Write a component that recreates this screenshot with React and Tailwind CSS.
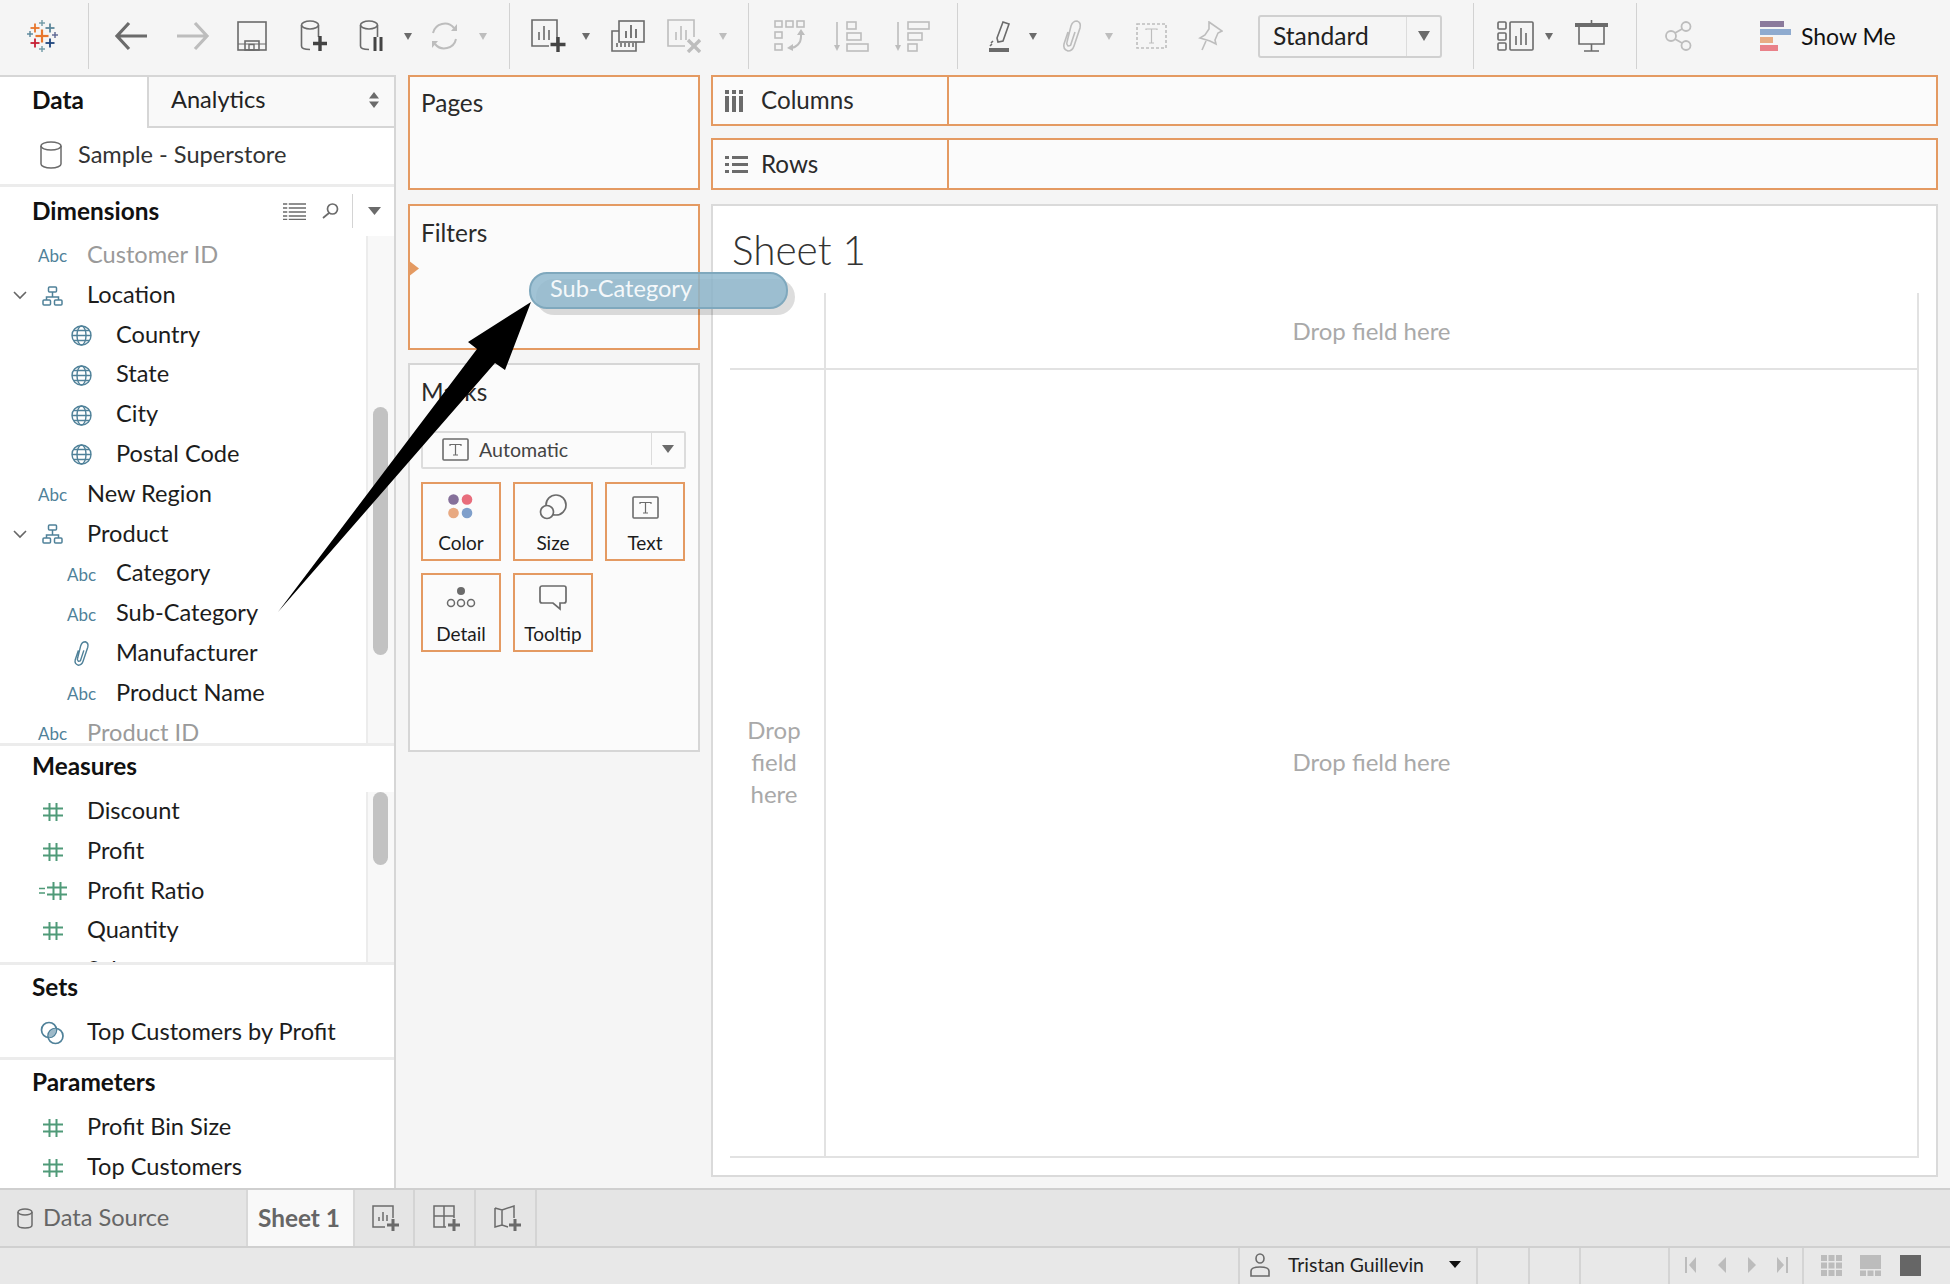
import React from "react";

const G = "#6b6b6b";
const L = "#bdbdbd";
const BLUE = "#4f8199";
const GREEN = "#4f9a78";

const Div = ({ c }) => <div className={`w-px h-[66px] bg-[#d2d2d2] ${c}`} />;
const DD = ({ c, color = G }) => (
  <svg width="8" height="7" viewBox="0 0 8 7" className={c}><path d="M0 0h8L4 7z" fill={color} /></svg>
);

const Logo = ({ c }) => {
  const cross = (x, y, s, t, col) => (
    <g key={`${x}-${y}`} fill={col}>
      <rect x={x - s} y={y - t / 2} width={s * 2} height={t} />
      <rect x={x - t / 2} y={y - s} width={t} height={s * 2} />
    </g>
  );
  return (
    <svg width="32" height="34" viewBox="0 0 32 34" className={c}>
      {cross(16, 17, 6.5, 2.2, "#e8762c")}
      {cross(9, 9, 4.5, 1.8, "#e8762c")}
      {cross(24, 9, 4.5, 1.8, "#5b879b")}
      {cross(16, 4, 3, 1.4, "#7099a6")}
      {cross(4, 15, 3, 1.4, "#59879b")}
      {cross(29, 16, 3, 1.4, "#5c6692")}
      {cross(9, 24, 4.5, 1.8, "#c72035")}
      {cross(24, 24, 4.5, 1.8, "#1f457e")}
      {cross(16, 30, 3, 1.4, "#7099a6")}
    </svg>
  );
};

const Back = ({ c, flip, color = G }) => (
  <svg width="34" height="30" viewBox="0 0 34 30" className={c} style={flip ? { transform: "scaleX(-1)" } : undefined}>
    <path d="M33 15H3M15 2 3 15l12 13" fill="none" stroke={color} strokeWidth="3.2" />
  </svg>
);

const Save = ({ c }) => (
  <svg width="30" height="30" viewBox="0 0 30 30" className={c} fill="none" stroke={G} strokeWidth="1.6">
    <rect x="1" y="1" width="28" height="28" />
    <path d="M1 23h28" strokeWidth="1" />
    <rect x="8" y="20" width="14" height="9" />
    <rect x="12" y="23.500" width="5" height="5.500" strokeWidth="1.4" />
  </svg>
);

const Cyl = ({ c, plus, pause }) => (
  <svg width="27" height="32" viewBox="0 0 27 32" className={c} fill="none" stroke={G} strokeWidth="1.6">
    <ellipse cx="10" cy="5" rx="8.5" ry="4" />
    <path d="M1.500 5v21c0 2 2 3.500 8.500 3.500M18.500 5v12" />
    {plus && <path d="M20 16v15M13 23.500h14" stroke="#444" strokeWidth="3.4" />}
    {pause && <path d="M16 17v14M22 17v14" stroke="#444" strokeWidth="3" />}
  </svg>
);

const Refresh = ({ c }) => (
  <svg width="31" height="30" viewBox="0 0 31 30" className={c} fill="none" stroke={L} strokeWidth="2">
    <path d="M4 12a12 12 0 0 1 21-5" />
    <path d="M27 18a12 12 0 0 1-21 5" />
    <path d="M22 10l6-7v7zM9 20l-6 7v-7z" fill={L} stroke="none" />
  </svg>
);

const NewSheet = ({ c }) => (
  <svg width="35" height="34" viewBox="0 0 35 34" className={c} fill="none" stroke={G} strokeWidth="1.6">
    <path d="M26 24V1H1v26h17" />
    <path d="M8 21V13M13 21V7M18 21V11" />
    <path d="M27 18v15M19.500 25.500h15" stroke="#444" strokeWidth="3.4" />
  </svg>
);

const Dup = ({ c }) => (
  <svg width="34" height="32" viewBox="0 0 34 32" className={c} fill="none" stroke={G} strokeWidth="1.6">
    <rect x="8" y="1" width="25" height="21" fill="#f5f5f5" />
    <path d="M15 18v-7M20 18V5M25 18V9" strokeWidth="1.8" />
    <path d="M8 11H1v20h24v-9" />
    <path d="M6 27v-4M10 27v-4M14 27v-4M18 27v-4M22 27v-4" />
  </svg>
);

const Clear = ({ c }) => (
  <svg width="34" height="34" viewBox="0 0 34 34" className={c} fill="none" stroke={L} strokeWidth="1.6">
    <path d="M27 18V1H1v26h17" />
    <path d="M9 21v-8M14 21V7M19 21v-10" />
    <path d="M21 21l12 12M33 21 21 33" strokeWidth="3.4" />
  </svg>
);

const Swap = ({ c }) => (
  <svg width="33" height="32" viewBox="0 0 33 32" className={c} fill="none" stroke={L} strokeWidth="1.6">
    <rect x="1" y="1" width="7" height="6" /><rect x="12" y="1" width="7" height="6" /><rect x="23" y="1" width="7" height="6" />
    <rect x="1" y="12" width="7" height="6" /><rect x="1" y="24" width="7" height="6" />
    <path d="M27 11v6a11 11 0 0 1-11 11" strokeWidth="2" />
    <path d="M23 15l4-6 4 6zM19 24l-6 4 6 3z" fill={L} stroke="none" />
  </svg>
);

const SortA = ({ c }) => (
  <svg width="35" height="31" viewBox="0 0 35 31" className={c} fill="none" stroke={L} strokeWidth="1.6">
    <path d="M3 1v26" /><path d="M0 24h6l-3 6z" fill={L} stroke="none" />
    <rect x="13" y="1" width="9" height="7" /><rect x="13" y="12" width="14" height="7" /><rect x="13" y="23" width="21" height="7" />
  </svg>
);
const SortD = ({ c }) => (
  <svg width="35" height="31" viewBox="0 0 35 31" className={c} fill="none" stroke={L} strokeWidth="1.6">
    <path d="M3 1v26" /><path d="M0 24h6l-3 6z" fill={L} stroke="none" />
    <rect x="13" y="1" width="21" height="7" /><rect x="13" y="12" width="14" height="7" /><rect x="13" y="23" width="9" height="7" />
  </svg>
);

const Highlight = ({ c }) => (
  <svg width="22" height="32" viewBox="0 0 22 32" className={c} fill="none" stroke={G} strokeWidth="1.6">
    <path d="M14 2l6 2-6 17-5 1-1-4z" />
    <path d="M2 23l2-2M1 26l2-2" />
    <rect x="0" y="28" width="20" height="4" fill={G} stroke="none" />
  </svg>
);

const Clip = ({ c, color = L, s = 1.6, w = 24, h = 32 }) => (
  <svg width={w} height={h} viewBox="0 0 24 32" className={c} fill="none" stroke={color} strokeWidth={s}>
    <path d="M8 12 4 24c-1 4 1 6 4 7 3 0 5-2 6-5l6-18c1-4 0-6-3-7-3 0-5 2-6 5L7 22c-1 2 0 3 1 4 2 0 3-1 3-2l4-12" />
  </svg>
);

const TBox = ({ c }) => (
  <svg width="31" height="26" viewBox="0 0 31 26" className={c} fill="none" stroke={L} strokeWidth="1.6">
    <rect x="1" y="1" width="29" height="24" strokeDasharray="3 2" />
    <path d="M10 7V6h11v1M15.500 6v14M13 20h5" strokeWidth="1.2" />
  </svg>
);

const Pin = ({ c }) => (
  <svg width="25" height="30" viewBox="0 0 25 30" className={c} fill="none" stroke={L} strokeWidth="1.6">
    <path d="M11 1l13 9-4 2-3 7 1 4-6-3-10-3 5-3 4-6z" />
    <path d="M8 20 4 29" />
  </svg>
);

const Fit = ({ c }) => (
  <svg width="37" height="30" viewBox="0 0 37 30" className={c} fill="none" stroke={G} strokeWidth="1.6">
    <rect x="1" y="1" width="8" height="7" rx="1" /><rect x="1" y="12" width="8" height="7" rx="1" /><rect x="1" y="22" width="8" height="7" rx="1" />
    <rect x="13" y="1" width="23" height="28" rx="1" />
    <path d="M19 24v-9M24 24V7M29 24V12" />
  </svg>
);

const Present = ({ c }) => (
  <svg width="33" height="32" viewBox="0 0 33 32" className={c} fill="none" stroke={G} strokeWidth="1.6">
    <path d="M16.500 0v4M16.500 24v7M9 31h15" />
    <rect x="0" y="3" width="33" height="4" fill={G} stroke="none" />
    <path d="M4 6v18h25V6" />
  </svg>
);

const Share = ({ c }) => (
  <svg width="27" height="30" viewBox="0 0 27 30" className={c} fill="none" stroke={L} strokeWidth="1.8">
    <circle cx="6" cy="15" r="5" /><circle cx="21" cy="5.500" r="4.500" /><circle cx="21" cy="24.500" r="4.500" />
    <path d="M10 12l7-4M10 18l7 4" />
  </svg>
);

const ShowMe = ({ c }) => (
  <svg width="31" height="30" viewBox="0 0 31 30" className={c}>
    <rect x="0" y="0" width="24" height="6" fill="#8b7a9c" />
    <rect x="0" y="8" width="31" height="6" fill="#8fabcf" />
    <rect x="0" y="16" width="13" height="6" fill="#e8ac84" />
    <rect x="0" y="24" width="18" height="6" fill="#e98189" />
  </svg>
);

const Abc = () => <span className="text-[17px] leading-none text-[#4f8199]">Abc</span>;

const Hier = () => (
  <svg width="21" height="20" viewBox="0 0 21 20" fill="none" stroke={BLUE} strokeWidth="1.5">
    <rect x="6.500" y="1" width="8" height="5" rx="1" />
    <path d="M10.500 6v5M4.500 14v-3h12v3" />
    <rect x="1" y="14" width="7.500" height="5" rx="1" /><rect x="12.500" y="14" width="7.500" height="5" rx="1" />
  </svg>
);
const Globe = () => (
  <svg width="21" height="21" viewBox="0 0 21 21" fill="none" stroke={BLUE} strokeWidth="1.4">
    <circle cx="10.500" cy="10.500" r="9.500" />
    <ellipse cx="10.500" cy="10.500" rx="4.500" ry="9.500" />
    <path d="M1 10.500h19M2.500 5.500h16M2.500 15.500h16" />
  </svg>
);
const Hash = () => (
  <svg width="20" height="20" viewBox="0 0 20 20" fill="none" stroke={GREEN} strokeWidth="2">
    <path d="M6.500 1v18M13.500 1v18M0 6.500h20M0 13.500h20" />
  </svg>
);
const CalcHash = () => (
  <svg width="28" height="20" viewBox="0 0 28 20" fill="none" stroke={GREEN} strokeWidth="2">
    <path d="M0 7.500h6M0 12h6" strokeWidth="1.6" />
    <path d="M14.500 1v18M21.500 1v18M8 6.500h20M8 13.500h20" />
  </svg>
);
const SetIcon = () => (
  <svg width="25" height="24" viewBox="0 0 25 24" fill="none" stroke={BLUE} strokeWidth="1.7">
    <circle cx="9" cy="9" r="7.500" />
    <circle cx="15.500" cy="15" r="7.500" />
    <path d="M15.500 7.500a7.500 7.500 0 0 0-7 7l.5 2a7.500 7.500 0 0 0 7-8z" fill="#9db9c8" stroke="none" />
  </svg>
);
const Chev = () => (
  <svg width="14" height="9" viewBox="0 0 14 9" fill="none" stroke="#666" strokeWidth="1.6"><path d="M1 1l6 6 6-6" /></svg>
);

const Field = ({ icon, name, indent, chev, muted }) => (
  <div className="relative h-[39.8px] shrink-0 flex items-center">
    {chev && <div className="absolute left-[13px] top-[15px] flex"><Chev /></div>}
    <div className={indent ? "w-[116px] pl-[67px] shrink-0 flex" : "w-[87px] pl-[38px] shrink-0 flex"}>
      <div className="w-[29px] flex justify-center items-center">{icon}</div>
    </div>
    <span className={muted ? "text-[#9a9a9a] pb-[2px]" : "text-[#1c1c1c] pb-[2px]"}>{name}</span>
  </div>
);

const Sep = () => <div className="h-[3px] shrink-0 bg-[#ececec]" />;

const Shelf = ({ c, label, icon }) => (
  <div className={`flex bg-[#fbfbfb] border-2 border-[#e49a62] ${c}`}>
    <div className="w-[236px] shrink-0 flex items-center border-r-2 border-[#e49a62]">
      <div className="w-[48px] pl-[12px] flex">{icon}</div>
      <span className="text-[24.2px] text-[#2a2a2a]">{label}</span>
    </div>
    <div className="flex-1" />
  </div>
);

const Card = ({ label, children }) => (
  <div className="w-[80px] h-[79px] border-2 border-[#e49a62] flex flex-col items-center">
    <div className="h-[44px] flex items-center justify-center mt-[1px]">{children}</div>
    <span className="text-[19px] leading-[28px] text-[#1c1c1c]">{label}</span>
  </div>
);

const MiniT = () => (
  <svg width="27" height="23" viewBox="0 0 27 23" fill="none" stroke={G} strokeWidth="1.6">
    <rect x="1" y="1" width="25" height="21" rx="1" />
    <path d="M8 8V6.500h11V8M13.500 6.500V17M11 17h5" strokeWidth="1.2" />
  </svg>
);

const Scroll = ({ c, thumb }) => (
  <div className={`w-[28px] shrink-0 bg-[#f8f8f8] border-l-2 border-[#ececec] ${c}`}>{thumb}</div>
);

const Head = ({ c, label }) => (
  <div className={`shrink-0 flex items-center pl-[32px] text-[24.4px] font-bold text-[#111] ${c}`}>{label}</div>
);

export default function App() {
  return (
    <div className="relative w-[1950px] h-[1284px] overflow-hidden flex flex-col bg-[#f5f5f5] text-[23.6px] leading-none font-['Lato','Liberation_Sans',sans-serif]">
      {/* Toolbar */}
      <div className="h-[75px] shrink-0 flex items-center pl-[26px] pb-[3px]">
        <Logo />
        <Div c="ml-[30px]" />
        <Back c="ml-[25px]" />
        <Back c="ml-[28px]" flip color={L} />
        <Save c="ml-[27px]" />
        <Cyl c="ml-[33px]" plus />
        <Cyl c="ml-[32px]" pause />
        <DD c="ml-[18px]" />
        <Refresh c="ml-[17px]" />
        <DD c="ml-[19px]" color={L} />
        <Div c="ml-[22px]" />
        <NewSheet c="ml-[21px]" />
        <DD c="ml-[16px]" />
        <Dup c="ml-[21px]" />
        <Clear c="ml-[22px]" />
        <DD c="ml-[18px]" color={L} />
        <Div c="ml-[21px]" />
        <Swap c="ml-[25px]" />
        <SortA c="ml-[27px]" />
        <SortD c="ml-[26px]" />
        <Div c="ml-[27px]" />
        <Highlight c="ml-[31px]" />
        <DD c="ml-[18px]" />
        <Clip c="ml-[23px]" />
        <DD c="ml-[21px]" color={L} />
        <TBox c="ml-[23px]" />
        <Pin c="ml-[31px]" />
        <div className="ml-[35px] w-[184px] h-[43px] flex items-center border-2 border-[#d0d0d0] rounded-[3px]">
          <span className="pl-[13px] flex-1 text-[24.6px] text-[#222]">Standard</span>
          <div className="w-[34px] h-full border-l border-[#dcdcdc] flex items-center justify-center">
            <svg width="12" height="10" viewBox="0 0 12 10"><path d="M0 0h12L6 10z" fill={G} /></svg>
          </div>
        </div>
        <Div c="ml-[31px]" />
        <Fit c="ml-[23px]" />
        <DD c="ml-[11px]" />
        <Present c="ml-[22px]" />
        <Div c="ml-[28px]" />
        <Share c="ml-[28px]" />
        <ShowMe c="ml-[68px]" />
        <span className="ml-[10px] text-[23px] text-[#111]">Show Me</span>
      </div>

      {/* Main */}
      <div className="flex-1 flex min-h-0">
        {/* Sidebar */}
        <div className="w-[396px] shrink-0 flex flex-col bg-white border-r-2 border-[#d6d6d6]">
          <div className="h-[53px] shrink-0 flex">
            <div className="w-[147px] flex items-center pl-[32px] pb-[5px] text-[24.4px] font-bold text-[#111] border-t-2 border-[#d6d6d6]">Data</div>
            <div className="flex-1 flex items-center justify-between pl-[22px] pr-[15px] pb-[3px] bg-[#f9f9f9] border-2 border-r-0 border-[#d6d6d6] text-[#222]">
              <span>Analytics</span>
              <svg width="10" height="16" viewBox="0 0 10 16"><path d="M5 0l5 6.500H0zM5 16l5-6.500H0z" fill={G} /></svg>
            </div>
          </div>
          <div className="h-[56px] shrink-0 flex items-center pl-[40px] pb-[3px]">
            <svg width="22" height="28" viewBox="0 0 22 28" fill="none" stroke={G} strokeWidth="1.5">
              <ellipse cx="11" cy="5" rx="10" ry="4" />
              <path d="M1 5v18c0 2 4 4 10 4s10-2 10-4V5" />
            </svg>
            <span className="ml-[16px] text-[#333]">Sample - Superstore</span>
          </div>
          <Sep />
          <div className="h-[49px] shrink-0 flex items-center pl-[32px] pr-[13px] pb-[1px] text-[24.4px] font-bold text-[#111]">
            <span className="flex-1">Dimensions</span>
            <svg width="23" height="17" viewBox="0 0 23 17" stroke={G} strokeWidth="1.5">
              <path d="M0 1h23M0 5h23M0 9h23M0 13h23M0 16.500h23" />
              <path d="M5 0v17" stroke="#fff" strokeWidth="1.500" />
            </svg>
            <svg className="ml-[16px]" width="17" height="16" viewBox="0 0 17 16" fill="none" stroke={G} strokeWidth="1.7">
              <circle cx="10.500" cy="6" r="5" /><path d="M7 10l-6 5" />
            </svg>
            <div className="ml-[13px] w-px h-[34px] bg-[#d4d4d4]" />
            <svg className="ml-[15px]" width="13" height="8" viewBox="0 0 13 8"><path d="M0 0h13L6.500 8z" fill={G} /></svg>
          </div>
          <div className="h-[507px] shrink-0 flex overflow-hidden">
            <div className="flex-1 flex flex-col">
              <Field icon={<Abc />} name="Customer ID" muted />
              <Field icon={<Hier />} name="Location" chev />
              <Field icon={<Globe />} name="Country" indent />
              <Field icon={<Globe />} name="State" indent />
              <Field icon={<Globe />} name="City" indent />
              <Field icon={<Globe />} name="Postal Code" indent />
              <Field icon={<Abc />} name="New Region" />
              <Field icon={<Hier />} name="Product" chev />
              <Field icon={<Abc />} name="Category" indent />
              <Field icon={<Abc />} name="Sub-Category" indent />
              <Field icon={<Clip color={BLUE} s={1.8} w={19} h={25} />} name="Manufacturer" indent />
              <Field icon={<Abc />} name="Product Name" indent />
              <Field icon={<Abc />} name="Product ID" muted />
            </div>
            <Scroll thumb={<div className="mt-[171px] ml-[5px] w-[15px] h-[248px] rounded-[8px] bg-[#c2c2c2]" />} />
          </div>
          <Sep />
          <Head c="h-[46px] pb-[5px]" label="Measures" />
          <div className="h-[170px] shrink-0 flex overflow-hidden">
            <div className="flex-1 flex flex-col">
              <Field icon={<Hash />} name="Discount" />
              <Field icon={<Hash />} name="Profit" />
              <Field icon={<CalcHash />} name="Profit Ratio" />
              <Field icon={<Hash />} name="Quantity" />
              <Field icon={<Hash />} name="Sales" />
            </div>
            <Scroll thumb={<div className="ml-[5px] w-[15px] h-[73px] rounded-[8px] bg-[#c2c2c2]" />} />
          </div>
          <Sep />
          <Head c="h-[42px] pt-[2px]" label="Sets" />
          <div className="h-[50px] shrink-0 pt-[6px] flex flex-col">
            <Field icon={<SetIcon />} name="Top Customers by Profit" />
          </div>
          <Sep />
          <Head c="h-[48px] pb-[4px]" label="Parameters" />
          <div className="flex flex-col">
            <Field icon={<Hash />} name="Profit Bin Size" />
            <Field icon={<Hash />} name="Top Customers" />
          </div>
        </div>

        {/* Cards column */}
        <div className="w-[292px] shrink-0 ml-[12px] flex flex-col">
          <div className="h-[115px] shrink-0 bg-[#fbfbfb] border-2 border-[#e49a62] pl-[11px] pt-[14px] text-[24.4px] text-[#2a2a2a]">Pages</div>
          <div className="relative mt-[14px] h-[146px] shrink-0 bg-[#fbfbfb] border-2 border-[#e49a62] pl-[11px] pt-[15px] text-[24.4px] text-[#2a2a2a]">
            Filters
            <svg className="absolute left-[-2px] top-[54px]" width="11" height="17" viewBox="0 0 11 17"><path d="M0 0l11 8.500L0 17z" fill="#e49a62" /></svg>
          </div>
          <div className="mt-[13px] h-[389px] shrink-0 bg-[#fbfbfb] border-2 border-[#d6d6d6] px-[11px] pt-[15px]">
            <div className="text-[24.4px] text-[#2a2a2a]">Marks</div>
            <div className="mt-[27px] w-[265px] h-[38px] flex items-center border-2 border-[#dcdcdc] rounded-[2px] pb-[2px]">
              <div className="ml-[19px] flex"><MiniT /></div>
              <span className="ml-[10px] flex-1 text-[19.6px] text-[#444]">Automatic</span>
              <div className="w-[33px] h-full border-l border-[#dcdcdc] flex items-center justify-center">
                <svg width="12" height="8" viewBox="0 0 12 8"><path d="M0 0h12L6 8z" fill={G} /></svg>
              </div>
            </div>
            <div className="mt-[13px] grid grid-cols-[80px_80px_81px] gap-x-[12px] gap-y-[12px]">
              <Card label="Color">
                <svg width="26" height="26" viewBox="0 0 26 26">
                  <circle cx="5.500" cy="5.500" r="5.300" fill="#85709a" /><circle cx="19" cy="5.500" r="5.300" fill="#e86d7c" />
                  <circle cx="5.500" cy="19" r="5.300" fill="#e8a982" /><circle cx="19" cy="19" r="5.300" fill="#7f9fcb" />
                </svg>
              </Card>
              <Card label="Size">
                <svg width="28" height="26" viewBox="0 0 28 26" fill="none" stroke={G} strokeWidth="1.7">
                  <circle cx="17" cy="11" r="10" /><circle cx="8" cy="18" r="6.500" fill="#fbfbfb" />
                </svg>
              </Card>
              <Card label="Text"><MiniT /></Card>
              <Card label="Detail">
                <svg width="30" height="24" viewBox="0 0 30 24" fill="none" stroke={G} strokeWidth="1.5">
                  <circle cx="15" cy="5" r="4" fill={G} stroke="none" />
                  <circle cx="5" cy="17" r="3.500" /><circle cx="15" cy="17" r="3.500" /><circle cx="25" cy="17" r="3.500" />
                </svg>
              </Card>
              <Card label="Tooltip">
                <svg width="28" height="26" viewBox="0 0 28 26" fill="none" stroke={G} strokeWidth="1.7">
                  <path d="M3 1h22a2 2 0 0 1 2 2v13a2 2 0 0 1-2 2h-4v6l-7-6H3a2 2 0 0 1-2-2V3a2 2 0 0 1 2-2z" />
                </svg>
              </Card>
            </div>
          </div>
        </div>

        {/* Right column */}
        <div className="w-[1227px] shrink-0 ml-[11px] flex flex-col">
          <Shelf c="h-[51px] shrink-0" label="Columns" icon={
            <svg width="19" height="22" viewBox="0 0 19 22" fill={G}>
              <rect x="0" y="6" width="4" height="16" /><rect x="7" y="6" width="4" height="16" /><rect x="14" y="6" width="4" height="16" />
              <rect x="0" y="0" width="4" height="4" /><rect x="7" y="0" width="4" height="4" /><rect x="14" y="0" width="4" height="4" />
            </svg>
          } />
          <Shelf c="mt-[12px] h-[52px] shrink-0" label="Rows" icon={
            <svg width="23" height="18" viewBox="0 0 23 18" fill={G}>
              <rect x="0" y="1" width="4" height="3" /><rect x="7" y="1" width="16" height="3" />
              <rect x="0" y="8" width="4" height="3" /><rect x="7" y="8" width="16" height="3" />
              <rect x="0" y="15" width="4" height="3" /><rect x="7" y="15" width="16" height="3" />
            </svg>
          } />
          <div className="mt-[14px] h-[973px] shrink-0 bg-white border-2 border-[#dadada] pl-[17px] pr-[17px] pb-[17px] flex flex-col">
            <div className="h-[87px] shrink-0 pl-[2px] pt-[22px] text-[40.5px] font-light leading-[44px] text-[#333]">Sheet 1</div>
            <div className="flex-1 grid grid-cols-[96px_1fr] grid-rows-[77px_1fr] border-r-2 border-b-2 border-[#e2e2e2] text-[24px] text-[#a9a9a9]">
              <div className="border-r-2 border-b-2 border-[#e2e2e2]" />
              <div className="flex items-center justify-center border-b-2 border-[#e2e2e2]">Drop field here</div>
              <div className="border-r-2 border-[#e2e2e2] pr-[6px] pb-[2px] flex items-center justify-center text-center leading-[32px]">Drop<br />field<br />here</div>
              <div className="flex items-center justify-center pb-[2px]">Drop field here</div>
            </div>
          </div>
        </div>
      </div>

      {/* Tab bar */}
      <div className="h-[58px] shrink-0 flex bg-[#e5e5e5] border-t-2 border-[#cfcfcf]">
        <div className="w-[246px] flex items-center pl-[17px] text-[#666]">
          <svg width="16" height="21" viewBox="0 0 16 21" fill="none" stroke={G} strokeWidth="1.5">
            <ellipse cx="8" cy="4" rx="7" ry="3" /><path d="M1 4v13c0 2 3 3 7 3s7-1 7-3V4" />
          </svg>
          <span className="ml-[10px]">Data Source</span>
        </div>
        <div className="w-[109px] flex items-center justify-center pr-[3px] bg-[#f9f9f9] border-x-2 border-[#d8d8d8] text-[24.4px] font-bold text-[#666]">Sheet 1</div>
        <div className="w-[60px] flex items-center justify-center pl-[4px] border-r-2 border-[#d4d4d4]">
          <svg width="28" height="27" viewBox="0 0 28 27" fill="none" stroke={G} strokeWidth="1.5">
            <path d="M21 13V1H1v21h12" /><path d="M7 16v-4M11 16V7M15 16v-6" />
            <path d="M21 14v12M15 20h12" strokeWidth="3" />
          </svg>
        </div>
        <div className="w-[61px] flex items-center justify-center pl-[4px] border-r-2 border-[#d4d4d4]">
          <svg width="28" height="27" viewBox="0 0 28 27" fill="none" stroke={G} strokeWidth="1.5">
            <path d="M21 13V1H1v21h12M1 11h20M11 1v21" />
            <path d="M21 14v12M15 20h12" strokeWidth="3" />
          </svg>
        </div>
        <div className="w-[61px] flex items-center justify-center pl-[4px] border-r-2 border-[#d4d4d4]">
          <svg width="28" height="27" viewBox="0 0 28 27" fill="none" stroke={G} strokeWidth="1.5">
            <path d="M1 3l7 2 12-4v12M1 3v19l7-2 6 2M8 5v15" />
            <path d="M21 14v12M15 20h12" strokeWidth="3" />
          </svg>
        </div>
      </div>

      {/* Status bar */}
      <div className="h-[38px] shrink-0 flex bg-[#e8e8e8] border-t-2 border-[#d0d0d0]">
        <div className="w-[1238px] shrink-0" />
        <div className="w-[240px] flex items-center border-x-2 border-[#d4d4d4] text-[19.4px] text-[#222] pl-[10px] pb-[3px]">
          <svg width="20" height="24" viewBox="0 0 20 24" fill="none" stroke={G} strokeWidth="1.6">
            <ellipse cx="10" cy="5.500" rx="4" ry="4.500" /><path d="M1 23v-5c0-3 3-4 9-4s9 1 9 4v5z" />
          </svg>
          <span className="ml-[18px] flex-1">Tristan Guillevin</span>
          <svg className="mr-[15px]" width="12" height="7" viewBox="0 0 12 7"><path d="M0 0h12L6 7z" fill="#111" /></svg>
        </div>
        <div className="w-[52px] border-r-2 border-[#d4d4d4]" />
        <div className="w-[51px] border-r-2 border-[#d4d4d4]" />
        <div className="w-[89px] border-r-2 border-[#d4d4d4]" />
        <div className="w-[134px] flex items-center pl-[15px] pb-[2px] border-r-2 border-[#d4d4d4]">
          <svg width="104" height="18" viewBox="0 0 104 18" fill="#bcbcbc">
            <rect x="0" y="1" width="2" height="16" /><path d="M11 1v16L4 9z" />
            <path d="M41 1v16l-8-8z" /><path d="M63 1v16l8-8z" />
            <path d="M92 1v16l7-8z" /><rect x="101" y="1" width="2" height="16" />
          </svg>
        </div>
        <div className="flex-1 flex items-center pl-[17px] pb-[2px]">
          <svg width="101" height="21" viewBox="0 0 101 21">
            <g fill="#bcbcbc">
              <rect x="0" y="0" width="6" height="6" /><rect x="7.500" y="0" width="6" height="6" /><rect x="15" y="0" width="6" height="6" />
              <rect x="0" y="7.500" width="6" height="6" /><rect x="7.500" y="7.500" width="6" height="6" /><rect x="15" y="7.500" width="6" height="6" />
              <rect x="0" y="15" width="6" height="6" /><rect x="7.500" y="15" width="6" height="6" /><rect x="15" y="15" width="6" height="6" />
              <rect x="39" y="0" width="21" height="14" />
              <rect x="39" y="15.500" width="6" height="5.500" /><rect x="46.500" y="15.500" width="6" height="5.500" /><rect x="54" y="15.500" width="6" height="5.500" />
            </g>
            <rect x="79" y="0" width="21" height="21" fill="#666" />
          </svg>
        </div>
      </div>

      {/* Drag pill */}
      <div className="absolute left-[536px] top-[279px] w-[259px] h-[36px] rounded-[18px] bg-[#00000022]" />
      <div className="absolute left-[529px] top-[272px] w-[259px] h-[37px] rounded-[18px] bg-[#90b8ced9] border-2 border-[#7fa8bd] flex items-center pl-[19px] pb-[3px] text-[#f4f8fa]">Sub-Category</div>

      {/* Annotation arrow */}
      <svg className="absolute left-[270px] top-[295px]" width="270" height="325" viewBox="270 295 270 325">
        <path d="M278 612 477 349 468 342 531 302 505 370 495 363Z" fill="#000" />
      </svg>
    </div>
  );
}
